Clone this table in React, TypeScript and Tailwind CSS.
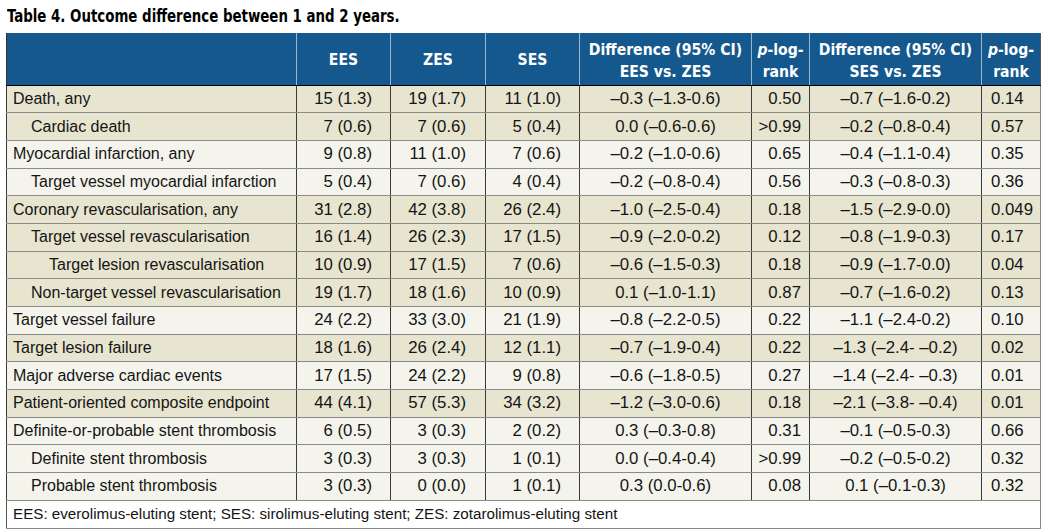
import React from "react";

type Row = {
  label: string;
  indent: 0 | 1 | 2;
  shade: boolean;
  ees: string;
  zes: string;
  ses: string;
  d1: string;
  p1: string;
  d2: string;
  p2: string;
};

const rows: Row[] = [
  { label: "Death, any", indent: 0, shade: true, ees: "15 (1.3)", zes: "19 (1.7)", ses: "11 (1.0)", d1: "\u20130.3 (\u20131.3-0.6)", p1: "0.50", d2: "\u20130.7 (\u20131.6-0.2)", p2: "0.14" },
  { label: "Cardiac death", indent: 1, shade: true, ees: "7 (0.6)", zes: "7 (0.6)", ses: "5 (0.4)", d1: "0.0 (\u20130.6-0.6)", p1: ">0.99", d2: "\u20130.2 (\u20130.8-0.4)", p2: "0.57" },
  { label: "Myocardial infarction, any", indent: 0, shade: false, ees: "9 (0.8)", zes: "11 (1.0)", ses: "7 (0.6)", d1: "\u20130.2 (\u20131.0-0.6)", p1: "0.65", d2: "\u20130.4 (\u20131.1-0.4)", p2: "0.35" },
  { label: "Target vessel myocardial infarction", indent: 1, shade: false, ees: "5 (0.4)", zes: "7 (0.6)", ses: "4 (0.4)", d1: "\u20130.2 (\u20130.8-0.4)", p1: "0.56", d2: "\u20130.3 (\u20130.8-0.3)", p2: "0.36" },
  { label: "Coronary revascularisation, any", indent: 0, shade: true, ees: "31 (2.8)", zes: "42 (3.8)", ses: "26 (2.4)", d1: "\u20131.0 (\u20132.5-0.4)", p1: "0.18", d2: "\u20131.5 (\u20132.9-0.0)", p2: "0.049" },
  { label: "Target vessel revascularisation", indent: 1, shade: true, ees: "16 (1.4)", zes: "26 (2.3)", ses: "17 (1.5)", d1: "\u20130.9 (\u20132.0-0.2)", p1: "0.12", d2: "\u20130.8 (\u20131.9-0.3)", p2: "0.17" },
  { label: "Target lesion revascularisation", indent: 2, shade: true, ees: "10 (0.9)", zes: "17 (1.5)", ses: "7 (0.6)", d1: "\u20130.6 (\u20131.5-0.3)", p1: "0.18", d2: "\u20130.9 (\u20131.7-0.0)", p2: "0.04" },
  { label: "Non-target vessel revascularisation", indent: 1, shade: true, ees: "19 (1.7)", zes: "18 (1.6)", ses: "10 (0.9)", d1: "0.1 (\u20131.0-1.1)", p1: "0.87", d2: "\u20130.7 (\u20131.6-0.2)", p2: "0.13" },
  { label: "Target vessel failure", indent: 0, shade: false, ees: "24 (2.2)", zes: "33 (3.0)", ses: "21 (1.9)", d1: "\u20130.8 (\u20132.2-0.5)", p1: "0.22", d2: "\u20131.1 (\u20132.4-0.2)", p2: "0.10" },
  { label: "Target lesion failure", indent: 0, shade: true, ees: "18 (1.6)", zes: "26 (2.4)", ses: "12 (1.1)", d1: "\u20130.7 (\u20131.9-0.4)", p1: "0.22", d2: "\u20131.3 (\u20132.4- \u20130.2)", p2: "0.02" },
  { label: "Major adverse cardiac events", indent: 0, shade: false, ees: "17 (1.5)", zes: "24 (2.2)", ses: "9 (0.8)", d1: "\u20130.6 (\u20131.8-0.5)", p1: "0.27", d2: "\u20131.4 (\u20132.4- \u20130.3)", p2: "0.01" },
  { label: "Patient-oriented composite endpoint", indent: 0, shade: true, ees: "44 (4.1)", zes: "57 (5.3)", ses: "34 (3.2)", d1: "\u20131.2 (\u20133.0-0.6)", p1: "0.18", d2: "\u20132.1 (\u20133.8- \u20130.4)", p2: "0.01" },
  { label: "Definite-or-probable stent thrombosis", indent: 0, shade: false, ees: "6 (0.5)", zes: "3 (0.3)", ses: "2 (0.2)", d1: "0.3 (\u20130.3-0.8)", p1: "0.31", d2: "\u20130.1 (\u20130.5-0.3)", p2: "0.66" },
  { label: "Definite stent thrombosis", indent: 1, shade: false, ees: "3 (0.3)", zes: "3 (0.3)", ses: "1 (0.1)", d1: "0.0 (\u20130.4-0.4)", p1: ">0.99", d2: "\u20130.2 (\u20130.5-0.2)", p2: "0.32" },
  { label: "Probable stent thrombosis", indent: 1, shade: false, ees: "3 (0.3)", zes: "0 (0.0)", ses: "1 (0.1)", d1: "0.3 (0.0-0.6)", p1: "0.08", d2: "0.1 (\u20130.1-0.3)", p2: "0.32" },
];

const indentCls = ["pl-[6px]", "pl-[24px]", "pl-[42px]"];

const cond = { fontFamily: '"Liberation Sans Narrow", "DejaVu Sans Condensed", "DejaVu Sans", sans-serif', fontStretch: "condensed" as const };

export default function App() {
  return (
    <div className="w-[1050px] h-[532px] bg-white text-[#141414]" style={{ fontFamily: '"Liberation Sans", Arial, sans-serif' }}>
      <div className="h-[33px] pl-[7px] pt-[4px] text-[18px] font-bold leading-[24px] text-black whitespace-nowrap" style={cond}>
        <span className="inline-block origin-left scale-x-[0.825]">Table 4. Outcome difference between 1 and 2 years.</span>
      </div>
      <table className="ml-[6px] w-[1034px] table-fixed border-collapse text-[16.8px]">
        <colgroup>
          <col className="w-[290px]" />
          <col className="w-[94px]" />
          <col className="w-[95px]" />
          <col className="w-[94px]" />
          <col className="w-[172px]" />
          <col className="w-[58px]" />
          <col className="w-[172px]" />
          <col className="w-[59px]" />
        </colgroup>
        <thead>
          <tr className="h-[52px] bg-[#15588e] text-white text-[15.6px] font-bold leading-[22px]" style={cond}>
            <th className="border-l border-[#333] border-b border-b-black"></th>
            <th className="border-l border-[#9db5cc] border-b border-b-black text-center pt-[3px]">EES</th>
            <th className="border-l border-[#9db5cc] border-b border-b-black text-center pt-[3px]">ZES</th>
            <th className="border-l border-[#9db5cc] border-b border-b-black text-center pt-[3px]">SES</th>
            <th className="border-l border-[#9db5cc] border-b border-b-black text-center pt-[4px]">Difference (95% CI)<br />EES vs. ZES</th>
            <th className="border-l border-[#9db5cc] border-b border-b-black text-center pt-[4px]"><i>p</i>-log-<br />rank</th>
            <th className="border-l border-[#9db5cc] border-b border-b-black text-center pt-[4px]">Difference (95% CI)<br />SES vs. ZES</th>
            <th className="border-l border-[#9db5cc] border-r border-r-[#555] border-b border-b-black text-center pt-[4px]"><i>p</i>-log-<br />rank</th>
          </tr>
        </thead>
        <tbody>
          {rows.map((r, i) => (
            <tr key={i} className={`h-[27.7px] leading-[18px] ${r.shade ? "bg-[#e7e4cf]" : "bg-[#f4f4ec]"}`}>
              <td className={`border border-[#3a3a3a] border-y-[#8a8a86] whitespace-nowrap text-[16px] ${indentCls[r.indent]}`}>{r.label}</td>
              <td className="border border-[#3a3a3a] border-y-[#8a8a86] text-right pr-[18px] whitespace-nowrap">{r.ees}</td>
              <td className="border border-[#3a3a3a] border-y-[#8a8a86] text-right pr-[19px] whitespace-nowrap">{r.zes}</td>
              <td className="border border-[#3a3a3a] border-y-[#8a8a86] text-right pr-[18px] whitespace-nowrap">{r.ses}</td>
              <td className="border border-[#3a3a3a] border-y-[#8a8a86] text-center whitespace-nowrap">{r.d1}</td>
              <td className="border border-[#3a3a3a] border-y-[#8a8a86] text-right pr-[8px] whitespace-nowrap">{r.p1}</td>
              <td className="border border-[#3a3a3a] border-y-[#8a8a86] text-center whitespace-nowrap">{r.d2}</td>
              <td className="border border-[#3a3a3a] border-y-[#8a8a86] border-r-[#8a8a86] pl-[9px] whitespace-nowrap">{r.p2}</td>
            </tr>
          ))}
          <tr className="h-[28px] bg-white">
            <td colSpan={8} className="border border-[#555] border-r-[#8a8a86] border-b-[#8a8a86] pl-[6px] leading-[18px] whitespace-nowrap text-[15.2px]">
              EES: everolimus-eluting stent; SES: sirolimus-eluting stent; ZES: zotarolimus-eluting stent
            </td>
          </tr>
        </tbody>
      </table>
    </div>
  );
}
